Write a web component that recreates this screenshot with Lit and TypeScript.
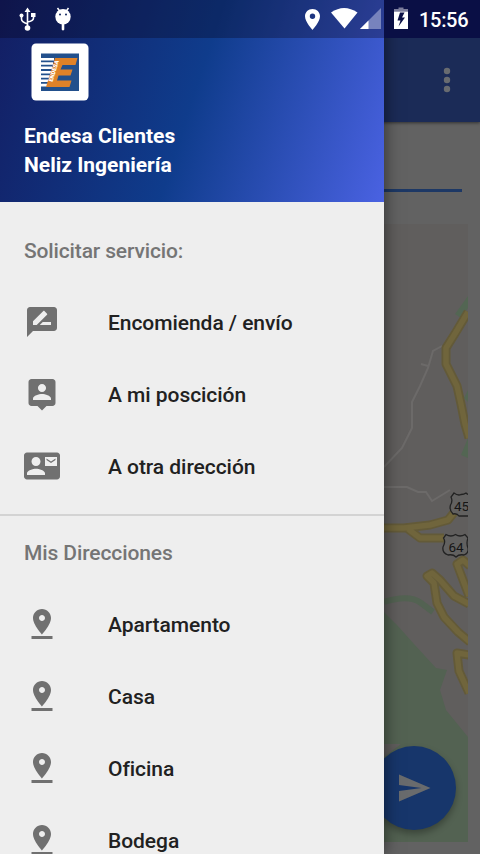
import { LitElement, html, css, svg } from "lit";
import { customElement } from "lit/decorators.js";

const icons: Record<string, unknown> = {
  review: svg`<path d="M20 2H4c-1.1 0-1.99.9-1.99 2L2 22l4-4h14c1.1 0 2-.9 2-2V4c0-1.1-.9-2-2-2zM6 14v-2.47l6.88-6.88c.2-.2.51-.2.71 0l1.77 1.77c.2.2.2.51 0 .71L8.47 14H6zm12 0h-7.5l2-2H18v2z"/>`,
  person: svg`<path d="M19 2H5c-1.11 0-2 .9-2 2v14c0 1.1.89 2 2 2h4l3 3 3-3h4c1.1 0 2-.9 2-2V4c0-1.1-.9-2-2-2zm-7 3.3c1.49 0 2.7 1.21 2.7 2.7s-1.21 2.7-2.7 2.7S9.3 9.49 9.3 8s1.21-2.7 2.7-2.7zM18 16H6v-.9c0-2 4-3.1 6-3.1s6 1.1 6 3.1v.9z"/>`,
  contact: svg`<path d="M21 8V7l-3 2-3-2v1l3 2 3-2zm1-5H2C.9 3 0 3.9 0 5v14c0 1.1.9 2 2 2h20c1.1 0 1.99-.9 1.99-2L24 5c0-1.1-.9-2-2-2zM8 6c1.66 0 3 1.34 3 3s-1.34 3-3 3-3-1.34-3-3 1.34-3 3-3zm6 12H2v-1c0-2 4-3.1 6-3.1s6 1.1 6 3.1v1zm8-6h-8V6h8v6z"/>`,
  pin: svg`<path d="M18 8c0-3.31-2.69-6-6-6S6 4.69 6 8c0 4.5 6 11 6 11s6-6.500 6-11zm-8 0c0-1.100.9-2 2-2s2 .9 2 2-.89 2-2 2c-1.100 0-2-.9-2-2zM5 20v2h14v-2H5z"/>`,
};

const services = [
  ["review", "Encomienda / envío"],
  ["person", "A mi poscición"],
  ["contact", "A otra dirección"],
];
const places = ["Apartamento", "Casa", "Oficina", "Bodega"];

@customElement("app-root")
export class AppRoot extends LitElement {
  static styles = css`
    :host {
      display: block;
      position: relative;
      width: 480px;
      height: 854px;
      overflow: hidden;
      background: #626262;
      font-family: Roboto, "Liberation Sans", sans-serif;
    }
    svg { display: block; }
    .page { display: flex; flex-direction: column; align-items: stretch; height: 854px; }
    .toolbar {
      box-sizing: border-box;
      height: 122px;
      padding: 66px 19px 0 0;
      display: flex;
      justify-content: flex-end;
      align-items: flex-start;
      background: #1b2b57;
      box-shadow: 0 1px 3px rgba(0, 0, 0, 0.5);
    }
    .field { height: 67px; margin: 0 18px; border-bottom: 3px solid #1d3865; }
    .map { margin: 32px 12px 0 384px; }
    .fab {
      position: absolute;
      left: 372px;
      top: 746px;
      width: 84px;
      height: 84px;
      border-radius: 50%;
      background: #17366b;
      box-shadow: 0 4px 7px rgba(0, 0, 0, 0.3);
      display: flex;
      align-items: center;
      justify-content: center;
    }
    .drawer {
      position: absolute;
      inset: 0 96px 0 0;
      background: #eeeeee;
      box-shadow: 0 0 16px rgba(0, 0, 0, 0.55);
    }
    .header {
      box-sizing: border-box;
      height: 202px;
      padding: 43px 24px 0;
      background: linear-gradient(108deg, #131e63 0%, #0f3c8c 50%, #4a62e2 100%);
      color: #fff;
      font-size: 21px;
      font-weight: 700;
      line-height: 29px;
    }
    .logo { margin: 0 0 21px 7px; }
    .subtitle {
      height: 72px;
      margin-top: 12px;
      padding: 0 24px;
      line-height: 74px;
      font-size: 21px;
      font-weight: 500;
      letter-spacing: -0.14px;
      color: #757575;
    }
    .second { margin-top: 0; letter-spacing: -0.1px; }
    .item {
      display: flex;
      align-items: center;
      gap: 48px;
      height: 72px;
      padding: 0 24px;
      font-size: 21px;
      line-height: 24px;
      font-weight: 500;
      letter-spacing: -0.05px;
      color: #212121;
    }
    .item span { padding-top: 2px; }
    .item svg { fill: #707070; }
    .divider { height: 2px; margin-top: 12px; background: #d3d3d3; }
    .status {
      position: absolute;
      inset: 0 0 auto 0;
      height: 38px;
      display: flex;
    }
    .left { width: 384px; background: rgba(5, 0, 20, 0.3); }
    .right {
      flex: 1;
      display: flex;
      align-items: center;
      background: #0a0f45;
      color: #fff;
      font-size: 20px;
      font-weight: 500;
    }
    .time { margin: 1px 0 0 11px; letter-spacing: -0.3px; }
  `;

  item(icon: string, label: string) {
    return html`<div class="item">
      <svg width="36" height="36" viewBox="0 0 24 24">${icons[icon]}</svg>
      <span>${label}</span>
    </div>`;
  }

  map() {
    const road = "M468 312L456 332L446 348V364L457 386L461 404L465 424L469 438M380 528L404 528L430 525L448 520L456 510M408 529L420 538L444 538M470 642L458 632L444 617L437 603L434 583L427 576L432 573L440 580L454 596L469 604M469 596L463 580L457 564L463 560L470 566M469 655L457 653L459 671L469 693";
    return svg`<svg class="map" width="84" height="618" viewBox="384 224 84 618">
      <rect x="384" y="224" width="84" height="618" fill="#605e5d"/>
      <path d="M384 612L397 625L414 644L436 668L447 670L440 690L446 710L468 737V842H384Z" fill="#536252"/>
      <path d="M384 602Q409 594 421 603L433 612" fill="none" stroke="#536252" stroke-width="6"/>
      <path d="M384 744H401L384 757Z" fill="#605e5d"/>
      <path d="M468 296L455 314L461 318L468 308M468 438L461 455L468 458M468 390L464 398L468 402" fill="#536653"/>
      <path d="M442 346L433 351L428 368L420 386L412 402L412 428L402 448L384 467M384 487H407L418 492H426L432 501L450 490M421 364L428 366" fill="none" stroke="#6c6a69" stroke-width="2"/>
      <g fill="none" stroke-linejoin="round">
        <path d="${road}" stroke="#635a38" stroke-width="9"/>
        <path d="${road}" stroke="#70653c" stroke-width="5.500"/>
      </g>
      <g fill="#626160" stroke="#222" stroke-width="1.300">
        <path d="M454 493Q458 496 461 494.500Q464 494.500 466 493Q469 496 473 493V516H459Q457 513 453 514Q449 510 450.500 505Q453 501 451 497Z"/>
        <path d="M446 534.500Q451 537.500 455.500 534.500Q460 537.500 465 534.500L468 538Q466 543 468 548Q469 553 464 555Q459 554 456 557Q453 554 448 555Q442 553 443 547Q446 542 443.500 538Z"/>
      </g>
      <g font-family="Roboto" font-size="13.500" fill="#151515">
        <text x="454" y="510.500">45</text><text x="448.500" y="551.500">64</text>
      </g>
    </svg>`;
  }

  render() {
    return html`
      <div class="page">
        <div class="toolbar">
          <svg width="28" height="28" viewBox="0 0 28 28" fill="#686b70">
            <circle cx="14" cy="5" r="3.200"/><circle cx="14" cy="14" r="3.200"/><circle cx="14" cy="23" r="3.200"/>
          </svg>
        </div>
        <div class="field"></div>
        ${this.map()}
      </div>
      <div class="fab">
        <svg width="36" height="36" viewBox="0 0 24 24" fill="#696b6d"><path d="M2.010 21L23 12 2.010 3 2 10l15 2-15 2z"/></svg>
      </div>
      <div class="drawer">
        <div class="header">
          <svg class="logo" width="58" height="58" viewBox="0 0 58 58">
            <rect x="0.500" y="0.500" width="57" height="57" rx="4.500" fill="#fff"/>
            <path d="M10 10.500H48V48H10Z" fill="#22508c"/>
            <path d="M10 15H23V17.500H10ZM10 19.300H22V21.800H10ZM10 23.600H21V26.100H10ZM10 27.900H20V30.400H10ZM10 32.200H19V34.700H10ZM10 36.500H18V39H10ZM10 40.800H16V43.500H10Z" fill="#fff"/>
            <path d="M24 15H46.500L44.500 22H31.500L29.500 26.500H41.500L39.500 32.500H27.500L26 37.500H40.500L38.500 44H15Z" fill="#df8228"/>
            <text transform="translate(21.500 39) rotate(-73)" font-family="Roboto" font-size="6" font-weight="900" fill="#fff" textLength="22" lengthAdjust="spacingAndGlyphs">ENDESA</text>
          </svg>
          <div>Endesa Clientes</div>
          <div>Neliz Ingeniería</div>
        </div>
        <div class="subtitle">Solicitar servicio:</div>
        ${services.map(([icon, label]) => this.item(icon, label))}
        <div class="divider"></div>
        <div class="subtitle second">Mis Direcciones</div>
        ${places.map((label) => this.item("pin", label))}
      </div>
      <div class="status">
        <div class="left">
          <svg width="384" height="38" viewBox="0 0 384 38" fill="#fff">
            <g fill="none" stroke="#fff" stroke-width="1.600"><path d="M27.500 11V27M21.500 16V19Q21.500 22 27.500 24M33.500 16V18Q33.500 21 27.500 22"/></g>
            <path d="M27.500 7.500L30.500 12H24.500ZM31 13H35.500V17H31Z"/><circle cx="21.500" cy="15.500" r="2"/><circle cx="27.500" cy="28" r="2.800"/>
            <circle cx="63" cy="16.800" r="7.700"/><path d="M57.500 8L60 11.500M68.500 8L66 11.500" stroke="#fff" stroke-width="1.500"/><path d="M61.700 23H64.300V29.500Q63 31.500 61.700 29.500Z"/>
            <circle cx="60" cy="14.500" r="1" fill="#10235d"/><circle cx="66" cy="14.500" r="1" fill="#10235d"/>
            <path fill-rule="evenodd" d="M312.500 9C308.200 9 305 12.200 305 16.300C305 21.700 312.500 30 312.500 30S320 21.700 320 16.300C320 12.200 316.800 9 312.500 9ZM312.500 13.600A2.700 2.700 0 1 1 312.500 19A2.700 2.700 0 1 1 312.500 13.600Z"/>
            <path d="M331 12.500Q344 3.500 357.500 12.500L344.500 28.500Z"/>
            <path d="M360 29L381 8V29Z" fill="#7783bd"/><path d="M360 29L368.500 20.500V29Z"/>
          </svg>
        </div>
        <div class="right">
          <svg width="24" height="38" viewBox="384 0 24 38">
            <path d="M394 11.500V9H398.500V7.500H403.500V9H408V11.500Z" fill="#7c7d9c"/><path d="M394 11.500H408V29H394Z" fill="#fff"/>
            <path d="M400 12.500L397.500 20.500H400.500L398.500 26.500L405 17.500H402L404.500 12.500Z" fill="#0a0f45"/>
          </svg>
          <span class="time">15:56</span>
        </div>
      </div>
    `;
  }
}
